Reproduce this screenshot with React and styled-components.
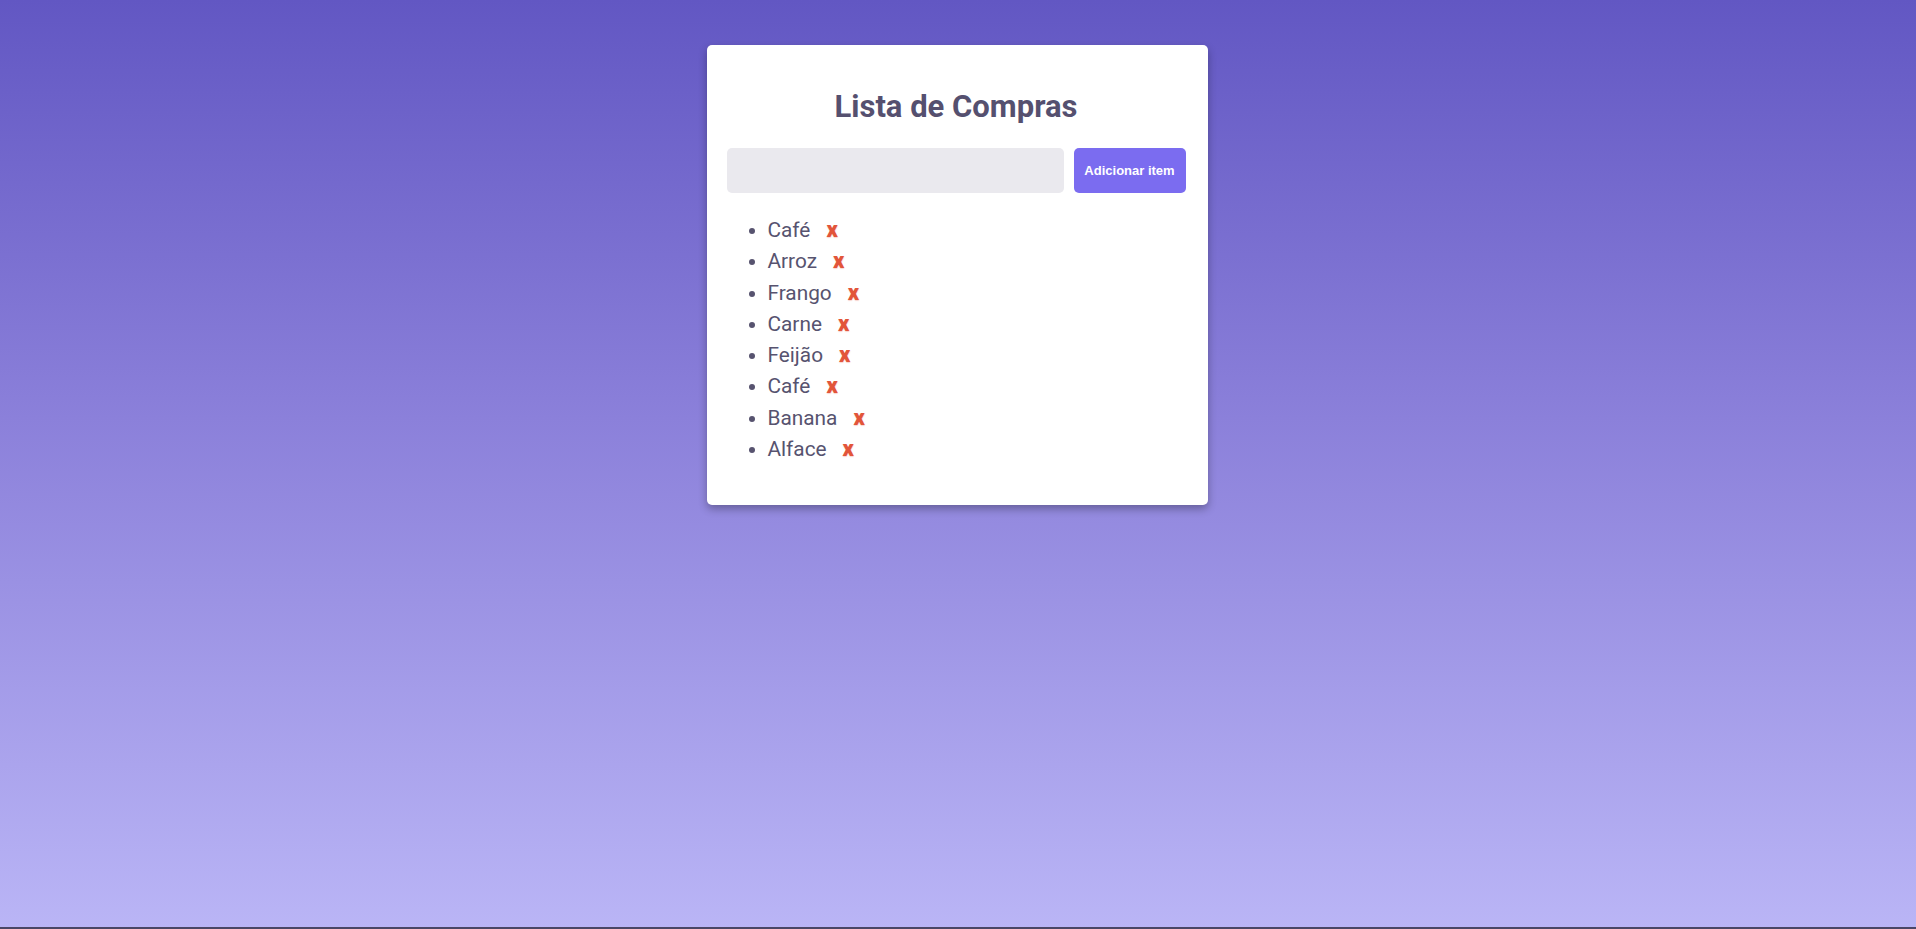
import React, { useState } from "react";
import styled, { createGlobalStyle } from "styled-components";

const Global = createGlobalStyle`
  html, body {
    margin: 0;
    padding: 0;
  }
  body {
    min-height: 100vh;
    background: linear-gradient(180deg, #6257c3 0%, #8b80da 45%, #bab5f6 100%);
    border-bottom: 2px solid #4a4666;
    box-sizing: border-box;
    font-family: Roboto, "Liberation Sans", sans-serif;
  }
`;

const Page = styled.div`
  display: flex;
  justify-content: center;
  padding-top: 45px;
  height: calc(100vh - 2px);
  box-sizing: border-box;
`;

const Card = styled.div`
  width: 501px;
  height: 460px;
  box-sizing: border-box;
  background: #ffffff;
  border-radius: 5px;
  box-shadow: 0 4px 8px rgba(0, 0, 0, 0.3);
  padding: 38px 22px 20px 20px;
  margin-left: -2px;
`;

const Title = styled.h1`
  margin: 0 0 17px;
  text-align: center;
  font-family: Roboto, "Liberation Sans", sans-serif;
  font-size: 31px;
  font-weight: 700;
  color: #55506f;
  line-height: 48px;
`;

const Form = styled.div`
  display: flex;
  gap: 10px;
`;

const Input = styled.input`
  flex: 1;
  height: 45px;
  box-sizing: border-box;
  border: none;
  border-radius: 5px;
  background: #eae9ee;
  padding: 0 12px;
  font-size: 16px;
  outline: none;
`;

const AddButton = styled.button`
  width: 112px;
  height: 45px;
  border: none;
  border-radius: 5px;
  background: #7b6cf0;
  color: #ffffff;
  font-family: "Liberation Sans", Arial, sans-serif;
  font-size: 13px;
  font-weight: 700;
  cursor: pointer;
  padding: 0;
`;

const List = styled.ul`
  margin: 22px 0 0;
  padding-left: 41px;
  color: #55506f;
`;

const Item = styled.li`
  font-size: 20.8px;
  line-height: 31.3px;
  font-family: Roboto, "Liberation Sans", sans-serif;
  color: #57536f;
`;

const Remove = styled.button`
  border: none;
  background: transparent;
  color: #e2553a;
  font-family: Roboto, "Liberation Sans", sans-serif;
  font-weight: 900;
  font-size: 22px;
  line-height: 1;
  margin-left: 14px;
  padding: 0 2px;
  cursor: pointer;
  text-shadow: 0 1px 1px rgba(226, 85, 58, 0.25);
`;

const initial = ["Café", "Arroz", "Frango", "Carne", "Feijão", "Café", "Banana", "Alface"];

const App = () => {
  const [items, setItems] = useState(initial);
  const [text, setText] = useState("");

  const add = () => {
    if (!text.trim()) return;
    setItems([...items, text.trim()]);
    setText("");
  };

  return (
    <>
      <Global />
      <Page>
        <Card>
          <Title>Lista de Compras</Title>
          <Form>
            <Input value={text} onChange={(e) => setText(e.target.value)} />
            <AddButton onClick={add}>Adicionar item</AddButton>
          </Form>
          <List>
            {items.map((item, i) => (
              <Item key={i}>
                {item}
                <Remove onClick={() => setItems(items.filter((_, j) => j !== i))}>x</Remove>
              </Item>
            ))}
          </List>
        </Card>
      </Page>
    </>
  );
};

export default App;
